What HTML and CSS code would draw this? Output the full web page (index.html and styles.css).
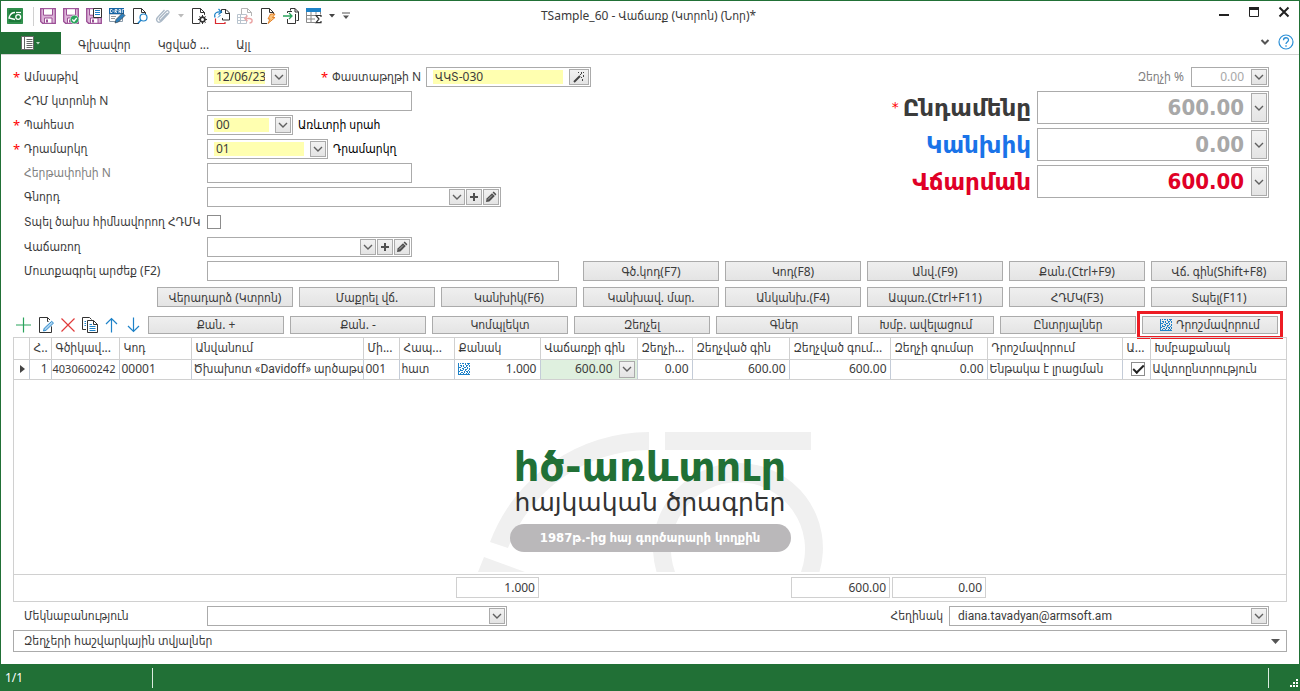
FILE: index.html
```html
<!DOCTYPE html>
<html lang="hy">
<head>
<meta charset="utf-8">
<title>TSample_60 - Վաճառք (Կտրոն) (Նոր)*</title>
<link rel="stylesheet" href="styles.css">
</head>
<body>
<svg class="defs" aria-hidden="true">
  <symbol id="caret" viewBox="0 0 10 10"><path d="M1 3l4 4 4-4" fill="none" stroke="#606060" stroke-width="1.400"/></symbol>
  <symbol id="plus" viewBox="0 0 10 10"><path d="M5 1v8M1 5h8" fill="none" stroke="#505050" stroke-width="2"/></symbol>
  <symbol id="pencil" viewBox="0 0 12 12"><path d="M1 11l.6-3.4 5.4-5.4 2.8 2.8-5.4 5.4z" fill="#505050"/><path d="M7.600 1.600l1.100-1 2.700 2.700-1 1.100z" fill="#505050"/><path d="M3 8.500l4-4" stroke="#ddd" stroke-width=".7"/></symbol>
  <symbol id="matrix" viewBox="0 0 12 12"><path fill="#1e82c8" d="M0 0h1v12h-1zM1 11h11v1h-11zM2 0h1v1h-1zM4 0h2v1h-2zM7 0h1v1h-1zM9 0h3v1h-3zM2 2h2v1h-2zM5 2h1v2h-1zM7 1h1v1h-1zM8 2h2v1h-2zM11 2h1v2h-1zM1 4h2v1h-2zM3 3h1v1h-1zM4 5h2v1h-2zM6 4h2v1h-2zM8 3h1v1h-1zM9 4h1v2h-1zM10 1h1v1h-1zM11 5h1v2h-1zM2 6h1v2h-1zM1 8h1v1h-1zM3 7h2v1h-2zM5 6h1v1h-1zM7 6h2v1h-2zM6 8h1v2h-1zM3 9h2v1h-2zM2 10h1v1h-1zM5 10h1v1h-1zM8 8h2v1h-2zM7 7h1v1h-1zM10 7h1v1h-1zM11 8h1v2h-1zM8 10h1v1h-1zM9 9h1v1h-1zM10 10h1v1h-1z"/></symbol>
  <symbol id="floppy" viewBox="0 0 16 16"><path d="M.7 .7h14.600v14.600H2.600L.7 13.400z" fill="#dcb3d8" stroke="#9b4f96" stroke-width="1.300"/><path d="M3.500 .7h9v6.500h-9z" fill="#fff" stroke="#9b4f96"/><path d="M4.500 10h7.500v5.300H4.500z" fill="#fff" stroke="#9b4f96"/><path d="M6 11.500h2v3H6z" fill="#9b4f96"/></symbol>
  <symbol id="page" viewBox="0 0 16 16"><path d="M1.500 .5h8l4 4v11h-12z" fill="#fff" stroke="#333"/><path d="M9.500 .5v4h4" fill="none" stroke="#333"/></symbol>
</svg>
<div class="window">
  <header class="titlebar">
    <div class="quick">
      <svg class="icon" viewBox="0 0 16 16"><rect width="16" height="16" rx="1" fill="#1c7a3a"/><rect x="1" y="1" width="14" height="14" fill="none" stroke="#43a35f"/><path d="M8 4.500Q4 4.500 2.500 8.500L2 10l6 1.500" fill="none" stroke="#fff" stroke-width="1.300"/><path d="M9 4.500h5" stroke="#fff" stroke-width="1.300"/><circle cx="11.200" cy="9" r="2.400" fill="none" stroke="#fff" stroke-width="1.300"/></svg>
      <span class="divider"></span>
      <button aria-label="Save"><svg class="icon"><use href="#floppy"/></svg></button>
      <button aria-label="Save and confirm"><svg class="icon" viewBox="0 0 16 16"><use href="#floppy"/><circle cx="11.500" cy="11.500" r="4.300" fill="#2aa35c" stroke="#fff" stroke-width=".5"/><path d="M9.300 11.500l1.700 1.700 2.700-3.200" fill="none" stroke="#fff" stroke-width="1.300"/></svg></button>
      <button aria-label="Save document"><svg class="icon" viewBox="0 0 16 16"><use href="#floppy"/><path d="M7.500 .5h8v9h-8z" fill="#fff" stroke="#333"/><path d="M9 2.500h5M9 4.500h5M9 6.500h5" stroke="#1e82c8"/></svg></button>
      <button aria-label="Draft"><svg class="icon" viewBox="0 0 16 16"><path d="M.5 6h13v7.500H.5z" fill="#fff" stroke="#8a9aaa"/><path d="M0 0h15v6H0z" fill="#1764a4"/><path d="M1.500 1.500v3h1.500l1-1v-1l-1-1zM6 5V1.500h2V3H6l2 2M10 5V1.500h1.500V5M10 3.500h1.500M13.300 5V1.500H15" fill="none" stroke="#fff" stroke-width=".8"/><path d="M2 8.500h5M2 10.500h4" stroke="#999"/><path d="M6 15l1-3.500 6.500-6.500 2.500 2.500-6.500 6.500z" fill="#2e80bd" stroke="#333" stroke-width=".6"/></svg></button>
      <button aria-label="Preview"><svg class="icon" viewBox="0 0 16 16"><use href="#page"/><path d="M7 6h9v10H7z" fill="#fff"/><circle cx="11.500" cy="9.500" r="3.500" fill="#fff" stroke="#1e82c8" stroke-width="1.200"/><path d="M9 12L6 15.300" stroke="#1e82c8" stroke-width="1.500"/></svg></button>
      <button aria-label="Attach" disabled><svg class="icon" viewBox="0 0 16 16"><path d="M12.500 5L6 11.800c-1 1-2.500-.3-1.500-1.500L11 3.500c2-2 4 .3 2.500 2L6.500 13c-3 3-6.500-.5-4-3.500L9.500 2" fill="none" stroke="#aab8c6" stroke-width="1.300"/></svg></button>
      <svg class="arrow faint" viewBox="0 0 6 4"><path d="M0 0h6L3 3.500z"/></svg>
      <button aria-label="Settings"><svg class="icon" viewBox="0 0 16 16"><use href="#page"/><circle cx="11.500" cy="11.500" r="4.900" fill="#fff"/><circle cx="11.500" cy="11.500" r="2.500" fill="none" stroke="#333" stroke-width="1.500"/><path d="M11.500 7v9M7 11.500h9M8.400 8.400l6.200 6.200M14.600 8.400l-6.200 6.200" stroke="#333"/><circle cx="11.500" cy="11.500" r="1.500" fill="#fff"/></svg></button>
      <button aria-label="Refresh"><svg class="icon" viewBox="0 0 16 16"><path d="M7.500 5V1.500H12l3.500 3.500v7H8.500V10" fill="none" stroke="#333"/><path d="M11.500 1.500V5.500h4" fill="none" stroke="#333"/><path d="M1 9.500C-.5 5 3 3.500 7 4M4.500 1L7.500 4 4.500 6.500" fill="none" stroke="#1e82c8" stroke-width="1.200"/><path d="M4 9.500l2.500-2.500" stroke="#1e82c8"/><path d="M1.500 10.500v5H11V14" fill="none" stroke="#d9292f" stroke-width="1.200"/></svg></button>
      <button aria-label="Undo print" disabled><svg class="icon" viewBox="0 0 16 16"><path d="M4.500 6V.5h6l4 4V8M10.500 .5v4h4" fill="none" stroke="#b5b5b5"/><path d="M.5 6.500h9v9h-9zM.5 9.500h9M.5 12.500h9M3.500 6.500v9" fill="none" stroke="#b9c4ce"/><path d="M8 10.500h4.500c3.500 .3 3.500 4.500 0 4.500M10.500 7.500l-2.800 3 2.800 2.800" fill="none" stroke="#eba6a6" stroke-width="1.400"/></svg></button>
      <button aria-label="Run"><svg class="icon" viewBox="0 0 16 16"><use href="#page"/><path d="M9 6h7v10H7z" fill="#fff"/><path d="M10.500 6h4.500l-2.500 3.500H15L8 15.500l2-4.500H8z" fill="#fbc27a" stroke="#e07a1f" stroke-width=".9"/></svg></button>
      <button aria-label="Copy to"><svg class="icon" viewBox="0 0 16 16"><path d="M7.500 2.500V.5h4.500l3.500 3.500v8.500h-2M12 .5V4h3.500M4.500 5V3.500H9M4.500 11v4.500h8V6" fill="none" stroke="#333"/><path d="M0 8h9M6 5l3 3-3 3" fill="none" stroke="#2aa35c" stroke-width="1.300"/></svg></button>
      <button aria-label="Totals"><svg class="icon" viewBox="0 0 16 16"><path d="M.5 1h14v13.500H.5zM.5 7.500h14M.5 11h14M5 3.500v11M10 3.500v11" fill="none" stroke="#888"/><path d="M0 0h15v4H0z" fill="#1e82c8"/><path d="M9 6.500h7V16H9z" fill="#fff"/><path d="M15 9V7.500h-5l3 3.500-3 3.700h5V13" fill="none" stroke="#333" stroke-width="1.200"/></svg></button>
      <svg class="arrow" viewBox="0 0 6 4"><path d="M0 0h6L3 3.500z"/></svg>
      <svg class="more" viewBox="0 0 8 8"><path d="M0 .5h8v1H0zM1 3.500h6L4 7z" fill="#555"/></svg>
    </div>
    <h1 class="title">TSample_60 - Վաճառք (Կտրոն) (Նոր)*</h1>
    <div class="controls">
      <button aria-label="Minimize"><svg viewBox="0 0 12 12"><path d="M1 8h10v2H1z" fill="#222"/></svg></button>
      <button aria-label="Maximize"><svg viewBox="0 0 12 12"><path d="M1.500 1.500h9v9h-9z" fill="none" stroke="#222"/><path d="M1 1h10v3H1z" fill="#222"/></svg></button>
      <button aria-label="Close"><svg viewBox="0 0 12 12"><path d="M1.500 1.500l9 9M10.500 1.500l-9 9" stroke="#222" stroke-width="2"/></svg></button>
    </div>
  </header>
  <nav class="tabs">
    <button class="file" aria-label="File"><svg width="20" height="14" viewBox="0 0 20 14"><path d="M.5 .5h12v13H.5z" fill="#fff" stroke="#666"/><path d="M3.500 1v12" stroke="#666"/><path d="M5.500 3.500h6M5.500 5.500h6M5.500 7.500h6M5.500 9.500h6M5.500 11.500h6" stroke="#666"/><path d="M15 6h4l-2 2.500z" fill="#b9d8c2"/></svg></button>
    <a href="#">Գլխավոր</a><a href="#">Կցված ...</a><a href="#">Այլ</a>
    <div class="help">
      <svg class="small" viewBox="0 0 10 10"><path d="M1.500 3L5 6.500 8.500 3" fill="none" stroke="#555" stroke-width="2"/></svg>
      <button aria-label="Help"><svg width="16" height="16" viewBox="0 0 16 16"><circle cx="8" cy="8" r="7" fill="none" stroke="#2b8fd6" stroke-width="1.200"/><path d="M5.500 6.200c0-3.300 5-3.200 5-.2 0 2-2.500 2-2.500 4M8 11.300v1.500" fill="none" stroke="#2b8fd6" stroke-width="1.300"/></svg></button>
    </div>
  </nav>

  <main class="content">
    <div class="form">
      <div class="fields">
        <label class="req" for="date">Ամսաթիվ</label>
        <div class="line">
          <div class="field w82 must"><input id="date" value="12/06/23"><button aria-label="Open"><svg class="small"><use href="#caret"/></svg></button></div>
          <label class="req docno" for="docno">Փաստաթղթի N</label>
          <div class="field w165 must"><input id="docno" value="ՎԿՏ-030"><button class="wide" aria-label="Generate"><svg width="12" height="12" viewBox="0 0 12 12"><path d="M1 11l6-6" stroke="#444" stroke-width="2"/><path d="M8 1h1v2h-1zM5 1h1v1h-1zM10 1h1v1h-1zM10 4h1v2h-1zM8 6h1v1h-1zM7 3h1v1h-1zM9 8h1v2h-1z" fill="#444"/></svg></button></div>
        </div>
        <label for="rec">ՀԴՄ կտրոնի N</label>
        <div class="field w205"><input id="rec"></div>
        <label class="req" for="store">Պահեստ</label>
        <div class="line"><div class="field w86 must"><input id="store" value="00"><button aria-label="Open"><svg class="small"><use href="#caret"/></svg></button></div><span class="note">Առևտրի սրահ</span></div>
        <label class="req" for="cash">Դրամարկղ</label>
        <div class="line"><div class="field w121 must"><input id="cash" value="01"><button aria-label="Open"><svg class="small"><use href="#caret"/></svg></button></div><span class="note">Դրամարկղ</span></div>
        <label class="dim" for="shift">Հերթափոխի N</label>
        <div class="field w205"><input id="shift"></div>
        <label for="buyer">Գնորդ</label>
        <div class="field w294"><input id="buyer"><button aria-label="Open"><svg class="small"><use href="#caret"/></svg></button><button aria-label="Add"><svg class="small"><use href="#plus"/></svg></button><button aria-label="Edit"><svg class="med"><use href="#pencil"/></svg></button></div>
        <label class="check-row" for="print">Տպել ծախս հիմնավորող ՀԴՄԿ</label>
        <div class="check-row"><input class="check" type="checkbox" id="print"></div>
        <label for="seller">Վաճառող</label>
        <div class="field w205"><input id="seller"><button aria-label="Open"><svg class="small"><use href="#caret"/></svg></button><button aria-label="Add"><svg class="small"><use href="#plus"/></svg></button><button aria-label="Edit"><svg class="med"><use href="#pencil"/></svg></button></div>
      </div>
      <div class="totals">
        <label class="dim" for="disc">Զեղչի %</label>
        <div class="field w78 end"><input id="disc" value="0.00"><button aria-label="Open"><svg class="small"><use href="#caret"/></svg></button></div>
        <label class="big req" for="total">Ընդամենը</label>
        <div class="field tall"><input id="total" value="600.00"><button aria-label="Open"><svg class="small"><use href="#caret"/></svg></button></div>
        <label class="big blue" for="paid">Կանխիկ</label>
        <div class="field tall"><input id="paid" value="0.00"><button aria-label="Open"><svg class="small"><use href="#caret"/></svg></button></div>
        <label class="big red" for="due">Վճարման</label>
        <div class="field tall due"><input id="due" value="600.00"><button aria-label="Open"><svg class="small"><use href="#caret"/></svg></button></div>
      </div>
    </div>

    <div class="entry">
      <label for="value">Մուտքագրել արժեք (F2)</label>
      <div class="field w352"><input id="value"></div>
      <div class="actions"><button>Գծ.կոդ(F7)</button><button>Կոդ(F8)</button><button>Անվ.(F9)</button><button>Քան.(Ctrl+F9)</button><button>Վճ. գին(Shift+F8)</button></div>
    </div>
    <div class="actions second"><button>Վերադարձ (Կտրոն)</button><button>Մաքրել վճ.</button><button>Կանխիկ(F6)</button><button>Կանխավ. մար.</button><button>Անկանխ.(F4)</button><button>Ապառ.(Ctrl+F11)</button><button>ՀԴՄԿ(F3)</button><button>Տպել(F11)</button></div>

    <div class="rowbar">
      <div class="tools">
        <button aria-label="Add row"><svg class="icon" viewBox="0 0 16 16"><path d="M7.500 .5v15M0 8h15" stroke="#2aa35c" stroke-width="1.200"/></svg></button>
        <button aria-label="Edit row"><svg class="icon" viewBox="0 0 16 16"><use href="#page"/><path d="M5 13.500l1-3 7.500-7.500 2.500 2.500-7.500 7.500z" fill="#fff" stroke="#fff" stroke-width="2"/><path d="M5.500 14l.7-2.700 7.500-7 1.800 1.800-7.500 7.200z" fill="#a8d0ee" stroke="#1e82c8" stroke-width=".9"/></svg></button>
        <button aria-label="Delete row"><svg class="icon" viewBox="0 0 16 16"><path d="M1.500 1.500l13 13M14.500 1.500l-13 13" stroke="#e03b3b" stroke-width="1.200"/></svg></button>
        <button aria-label="Copy row"><svg class="icon" viewBox="0 0 16 16"><path d="M4 12.500H.5V.5h7l2 2" fill="none" stroke="#333"/><path d="M2.500 4.500h1.500M2.500 6.500h1.500M2.500 8.500h1.500" stroke="#1e82c8"/><path d="M5.500 3.500h6l4 4v8h-10z" fill="#fff" stroke="#333"/><path d="M11.500 3.500v4h4" fill="none" stroke="#333"/><path d="M7.500 7.500h2.500M7.500 9.500h6M7.500 11.500h6M7.500 13.500h6" stroke="#1e82c8"/></svg></button>
        <button aria-label="Move up"><svg class="icon" viewBox="0 0 16 16"><path d="M7.500 15.500V1.500M2 7l5.500-5.500L13 7" fill="none" stroke="#1e82c8" stroke-width="1.200"/></svg></button>
        <button aria-label="Move down"><svg class="icon" viewBox="0 0 16 16"><path d="M7.500 .5v14M2 9l5.500 5.500L13 9" fill="none" stroke="#1e82c8" stroke-width="1.200"/></svg></button>
      </div>
      <div class="actions slim"><button>Քան. +</button><button>Քան. -</button><button>Կոմպլեկտ</button><button>Զեղչել</button><button>Գներ</button><button>Խմբ. ավելացում</button><button>Ընտրյալներ</button><button class="marked"><svg class="med"><use href="#matrix"/></svg>Դրոշմավորում</button></div>
    </div>

    <section class="grid">
      <table>
        <colgroup><col class="c15"><col class="c22"><col class="c68"><col class="c72"><col class="c172"><col class="c36"><col class="c55"><col class="c86"><col class="c97"><col class="c55"><col class="c97"><col class="c101"><col class="c97"><col class="c135"><col class="c28"><col></colgroup>
        <thead><tr><th></th><th>Հ..</th><th>Գծիկավ...</th><th>Կոդ</th><th>Անվանում</th><th>Մի...</th><th>Հապ...</th><th>Քանակ</th><th>Վաճառքի գին</th><th>Զեղչի...</th><th>Զեղչված գին</th><th>Զեղչված գում...</th><th>Զեղչի գումար</th><th>Դրոշմավորում</th><th>Ա...</th><th>Խմբաքանակ</th></tr></thead>
        <tbody><tr><td class="mark"><svg width="5" height="8" viewBox="0 0 5 8"><path d="M0 0l5 4-5 4z" fill="#444"/></svg></td><td class="num">1</td><td class="code">4030600242</td><td>00001</td><td class="name">Ծխախոտ «Davidoff» արծաթա</td><td>001</td><td>հատ</td><td><div class="qty"><svg class="med"><use href="#matrix"/></svg>1.000</div></td><td class="active"><div class="price">600.00<button aria-label="Open"><svg class="small"><use href="#caret"/></svg></button></div></td><td class="num">0.00</td><td class="num">600.00</td><td class="num">600.00</td><td class="num">0.00</td><td>Ենթակա է լրացման</td><td class="mid"><input class="check" type="checkbox" checked aria-label="Ա"></td><td>Ավտոընտրություն</td></tr></tbody>
      </table>
      <div class="canvas">
        <div class="brand">
          <svg class="shape" viewBox="0 0 345 140"><g fill="#f0f0f0"><path d="M171 0A170 170 0 0 0 12 110L30 116A152 152 0 0 1 171 18z"/><path d="M6 125L47 140H0z"/><path d="M187 0h146v18H187z"/><path d="M260 31a85 85 0 0 0-81.500 109h18.500a67 67 0 1 1 126 0h18.500A85 85 0 0 0 260 31z"/></g></svg>
          <strong>հծ-առևտուր</strong>
          <span class="sub">հայկական ծրագրեր</span>
          <span class="pill">1987թ.-ից հայ գործարարի կողքին</span>
        </div>
      </div>
      <table class="sums">
        <colgroup><col class="c441"><col class="c85"><col class="c250"><col class="c101"><col class="c96"><col></colgroup>
        <tr><td></td><td><output>1.000</output></td><td></td><td><output>600.00</output></td><td><output>0.00</output></td><td></td></tr>
      </table>
    </section>

    <div class="notes">
      <label for="comment">Մեկնաբանություն</label>
      <div class="field w300"><select id="comment"><option></option></select><span class="drop"><svg class="small"><use href="#caret"/></svg></span></div>
      <label class="author" for="author">Հեղինակ</label>
      <div class="field w320"><select id="author"><option>diana.tavadyan@armsoft.am</option></select><span class="drop"><svg class="small"><use href="#caret"/></svg></span></div>
    </div>
    <button class="expander">Զեղչերի հաշվարկային տվյալներ<svg width="9" height="5" viewBox="0 0 9 5"><path d="M0 0h9L4.500 5z" fill="#555"/></svg></button>
  </main>
  <footer class="status"><span class="count">1/1</span><span class="corner"><svg width="9" height="9" viewBox="0 0 9 9"><path fill="#fff" d="M7 0h2v2H7zM4 3h2v2H4zM7 3h2v2H7zM1 6h2v2H1zM4 6h2v2H4zM7 6h2v2H7z"/></svg></span></footer>
</div>
</body>
</html>
```
FILE: styles.css
```css
* { box-sizing: border-box; }
body {
  margin: 0;
  background: #fff;
  color: #3b3b3b;
  font: 12px/16px "Noto Sans", "DejaVu Sans Condensed", "DejaVu Sans", sans-serif;
}
button, input, select { font: inherit; color: inherit; margin: 0; padding: 0; }
button { border: 0; background: none; }
svg { display: block; }
.defs { position: absolute; width: 0; height: 0; }
.icon { width: 16px; height: 16px; overflow: visible; }
.small { width: 10px; height: 10px; }
.med { width: 12px; height: 12px; }

.window {
  min-height: 100vh;
  display: flex;
  flex-direction: column;
  border: 1px solid #217036;
  border-bottom: 0;
}

.titlebar { display: grid; grid-template-columns: 1fr auto 1fr; align-items: center; height: 31px; padding: 0 9px 1px 6px; }
.quick { display: flex; align-items: center; gap: 7px; }
.divider { width: 1px; height: 19px; margin: 0 -1px 0 3px; background: #d0d0d0; }
.arrow { width: 6px; height: 4px; fill: #444; }
.faint { fill: #bbb; }
.more { width: 8px; height: 8px; }
.title { margin: 0; font-size: 12px; font-weight: 400; }
.controls { display: flex; justify-content: flex-end; align-self: start; gap: 18px; padding-top: 5px; }
.controls svg { width: 12px; height: 12px; }

.tabs { display: flex; align-items: center; height: 23px; border-bottom: 1px solid #d2d2d2; }
.file { display: flex; align-items: center; justify-content: center; align-self: stretch; width: 60px; background: #217036; }
.tabs a { color: inherit; text-decoration: none; margin-left: 27px; padding-top: 4px; }
.tabs .file + a { margin-left: 17px; }
.help { display: flex; align-items: center; gap: 8px; margin-left: auto; padding: 0 5px 3px 0; }

.content { flex: 1; display: flex; flex-direction: column; padding: 12px 12px; }
.form { display: flex; justify-content: space-between; }
.fields { display: grid; grid-template-columns: 183px auto; grid-auto-rows: minmax(20px, auto); gap: 4px 0; padding-left: 11px; }
.fields label { position: relative; align-self: center; white-space: nowrap; }
.req::before { content: "*"; color: #f00; }
.fields .req::before { position: absolute; left: -11px; font-size: 13px; }
.line { display: flex; align-items: center; }
.docno { margin: 0 5px 0 43px; }
.note { margin-left: 5px; color: #000; }
.dim, .fields .dim { color: #808080; }
.fields .check-row { min-height: 22px; display: flex; align-items: center; }

.field { display: flex; align-items: stretch; height: 20px; padding: 1px; gap: 1px; border: 1px solid #ababab; background: #fff; }
.field input { flex: 1; min-width: 0; border: 0; outline: 0; background: none; padding: 0 6px; }
.must input { background: #ffffb0; margin: 1px 5px; padding: 0 0 0 2px; }
.field select { flex: 1; min-width: 0; appearance: none; border: 0; background: none; padding: 0 7px; font-family: Roboto, "Noto Sans", sans-serif; }
.field button, .drop, .price button {
  display: grid;
  place-items: center;
  width: 16px;
  border: 1px solid #ababab;
  background: linear-gradient(#f2f2f2, #e4e4e4);
}
.field .wide { width: 20px; }
.w78 { width: 78px; }
.w82 { width: 82px; }
.w86 { width: 86px; }
.w121 { width: 121px; }
.w165 { width: 165px; }
.w205 { width: 205px; }
.w294 { width: 294px; }
.w300 { width: 300px; }
.w320 { width: 320px; }
.w352 { width: 352px; }

.totals { display: grid; grid-template-columns: auto 232px; grid-auto-rows: max-content; gap: 4px 6px; align-content: start; padding-right: 18px; }
.totals label { align-self: center; text-align: right; }
.totals .dim { margin-right: -153px; }
.end { justify-self: end; color: #a8a8a8; }
.totals input { text-align: right; }
.totals .big { font: bold 23px/28px "DejaVu Sans", sans-serif; }
.big.req::before { font-size: 14px; font-weight: 400; vertical-align: 4px; margin-right: 4px; }
.blue { color: #1a73e8; }
.red, .tall.due { color: #e00026; }
.tall { height: 33px; color: #a8a8a8; font: bold 22px/28px "DejaVu Sans Condensed", "DejaVu Sans", sans-serif; }

.entry { display: grid; grid-template-columns: 183px auto 1fr; align-items: center; margin-top: 4px; padding-left: 11px; }
.actions { display: flex; justify-content: flex-end; gap: 6px; }
.actions button {
  display: flex;
  align-items: center;
  justify-content: center;
  gap: 4px;
  width: 136px;
  height: 20px;
  padding-top: 1px;
  border: 1px solid #ababab;
  background: linear-gradient(#efefef, #e4e4e4);
  white-space: nowrap;
}
.second { margin-top: 6px; }
.rowbar { display: flex; align-items: center; justify-content: space-between; height: 26px; margin: 5px 0 -1px; padding-right: 9px; }
.tools { display: flex; gap: 6px; padding-left: 3px; }
.actions.slim button { height: 18px; padding: 0; }
.marked { outline: 3px solid #ed1c24; outline-offset: 2px; }

.grid { flex: 1; display: flex; flex-direction: column; border: 1px solid #d0d0d0; }
.grid table { width: 100%; table-layout: fixed; border-collapse: collapse; }
.grid th { height: 21px; font-weight: 400; text-align: left; padding: 0 0 0 4px; border-right: 1px solid #d0d0d0; border-bottom: 1px solid #d0d0d0; white-space: nowrap; overflow: hidden; }
.grid td { height: 20px; padding: 0 2px; border-right: 1px solid #c4ccd8; border-bottom: 1px solid #d0d0d0; white-space: nowrap; overflow: hidden; }
.grid th:last-child, .grid td:last-child { border-right: 0; }
.grid .num { text-align: right; padding-right: 3px; }
.grid .mark { padding-left: 6px; }
.grid .mid { padding-left: 8px; }
.grid .code { padding: 0 1px; font-size: 11px; }
.grid .name { padding-right: 0; font-family: Roboto, "DejaVu Sans Condensed", sans-serif; }
.grid .active { background: #dff0df; }
.qty { display: flex; justify-content: space-between; align-items: center; padding: 0 1px; }
.price { display: flex; justify-content: flex-end; align-items: center; gap: 6px; }
.price button { height: 17px; }
.c15 { width: 15px; } .c22 { width: 22px; } .c28 { width: 28px; } .c36 { width: 36px; }
.c55 { width: 55px; } .c68 { width: 68px; } .c72 { width: 72px; } .c85 { width: 85px; }
.c86 { width: 86px; } .c96 { width: 96px; } .c97 { width: 97px; } .c101 { width: 101px; }
.c135 { width: 135px; } .c172 { width: 172px; } .c250 { width: 250px; } .c441 { width: 441px; }

.check { appearance: none; display: block; width: 14px; height: 14px; border: 1px solid #8c8c8c; background: #fff; }
.check:checked::after { content: ""; display: block; width: 9px; height: 4px; margin: 2px 1px; border: solid #222; border-width: 0 0 2px 2px; transform: rotate(-45deg); }

.canvas { flex: 1; display: flex; justify-content: center; align-items: flex-end; padding-bottom: 2px; min-height: 150px; }
.brand { position: relative; width: 345px; height: 140px; display: flex; flex-direction: column; align-items: center; padding-top: 14px; font-family: "DejaVu Sans", sans-serif; white-space: nowrap; }
.shape { position: absolute; inset: 0; width: 345px; height: 140px; }
.brand strong { position: relative; color: #217036; font-size: 40px; line-height: 42px; }
.sub { position: relative; color: #333; font-size: 25px; line-height: 30px; }
.pill { position: relative; width: 281px; margin-top: 6px; border-radius: 14px; background: #bab8ba; color: #fff; font-family: "DejaVu Sans Condensed", sans-serif; font-size: 13px; font-weight: 700; line-height: 28px; text-align: center; }

.grid .sums td { height: 27px; padding: 0 1px; border-right: 0; border-bottom: 0; }
.sums { border-top: 1px solid #d0d0d0; }
.sums output { display: block; height: 21px; padding: 2px 3px; border: 1px solid #d0d0d0; text-align: right; line-height: 16px; }

.notes { display: flex; align-items: center; margin-top: 4px; padding: 0 18px 0 11px; }
.notes label:first-child { width: 183px; }
.author { margin: 0 6px 0 auto; }
.expander { display: flex; align-items: center; justify-content: space-between; height: 22px; margin-top: 4px; padding: 0 6px 0 10px; border: 1px solid #ababab; }

.status { display: flex; align-items: center; justify-content: space-between; height: 27px; background: #217036; color: #fff; }
.count { width: 152px; height: 20px; padding: 2px 4px; border-right: 1px solid #dcebe0; }
.corner { display: flex; justify-content: flex-end; align-items: flex-end; width: 31px; height: 20px; padding-right: 1px; border-left: 1px solid #dcebe0; }
```
